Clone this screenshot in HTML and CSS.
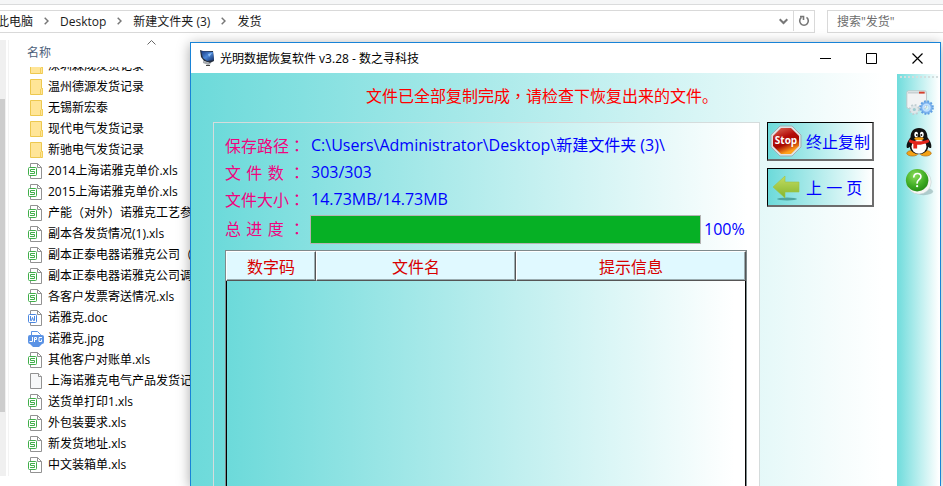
FILE: index.html
```html
<!DOCTYPE html>
<html lang="zh-CN">
<head>
  <meta charset="UTF-8">
  <meta name="viewport" content="width=device-width, initial-scale=1.0">
  <title>光明数据恢复软件 v3.28 - 数之寻科技</title>
  <link rel="stylesheet" href="styles.css">
</head>
<body>
  <svg class="sprite" aria-hidden="true">
    <symbol id="folder" viewBox="0 0 16 16">
      <path fill="#ffe597" stroke="#edc84f" d="M2.5.5h11v9h1v6h-12z"/>
      <path fill="#f3cf5b" d="M12 10h1v6h-1zM14 9h1v6h-1z"/>
    </symbol>
    <symbol id="xls" viewBox="0 0 16 16">
      <path fill="#fff" stroke="#929292" d="M2.5 5V.5h7l4 4v11h-11V13"/>
      <path fill="none" stroke="#929292" d="M9.5.5v4h4"/>
      <rect x=".5" y="4.5" width="8" height="8" rx="1" fill="#fff" stroke="#3fae49"/>
      <path fill="none" stroke="#3fae49" d="M7 6.5H2.500v2h4v2H2"/>
    </symbol>
    <symbol id="doc" viewBox="0 0 16 16">
      <path fill="#fff" stroke="#929292" d="M2.500 5V.500h7l4 4v11h-11V13"/>
      <path fill="none" stroke="#929292" d="M9.500.500v4h4"/>
      <rect x=".5" y="4.500" width="8" height="8" rx="1" fill="#fff" stroke="#4a86e0"/>
      <path fill="none" stroke="#4a86e0" d="M2.500 6v4.500h1l1-3 1 3h1V6"/>
    </symbol>
    <symbol id="jpg" viewBox="0 0 16 16">
      <path fill="#fff" stroke="#5b93e5" d="M3.500 5V.500h6l3 3V5"/>
      <rect y="4" width="16" height="9" rx="2" fill="#5b93e5"/>
      <path fill="#5b93e5" d="M2 13h12l-3 3H5z"/>
      <path fill="none" stroke="#fff" d="M4.500 6v4.500h-3M6.500 11V6.500h2v2h-2M14 6.500h-3v4h2.500v-2"/>
    </symbol>
    <symbol id="file" viewBox="0 0 16 16">
      <path fill="#f7f8f9" stroke="#929292" d="M2.500.500h8l3 3v12h-11z"/>
      <path fill="#fff" stroke="#929292" d="M10.500.500v3h3"/>
    </symbol>
    <symbol id="sep" viewBox="0 0 5 8">
      <path fill="none" stroke="#777" stroke-width="1.500" d="M.7.700 4 4 .7 7.300"/>
    </symbol>
  </svg>

  <div class="explorer">
    <div class="ribbon"></div>
    <div class="toolbar">
      <nav class="address">
        <a href="#">此电脑</a>
        <svg class="sep"><use href="#sep"/></svg>
        <a href="#">Desktop</a>
        <svg class="sep"><use href="#sep"/></svg>
        <a href="#">新建文件夹 (3)</a>
        <svg class="sep"><use href="#sep"/></svg>
        <a href="#">发货</a>
        <button class="drop" aria-label="历史记录"><svg width="9" height="7" viewBox="0 0 9 7"><path fill="none" stroke="#777" stroke-width="2" d="M.7 1.200 4.500 5l3.800-3.800"/></svg></button>
        <button class="refresh" aria-label="刷新"><svg width="12" height="12" viewBox="0 0 12 12"><path fill="none" stroke="#777" stroke-width="1.600" d="M3.500 2.400A4.300 4.300 0 1 0 8.500 2.400M2 1.500h3.500V5"/></svg></button>
      </nav>
      <input class="search" type="text" aria-label="搜索" placeholder="搜索&quot;发货&quot;">
    </div>

    <div class="content">
      <div class="scrollbar"><div class="thumb"></div></div>
      <div class="files">
        <div class="column-head">
          <span>名称</span>
          <svg width="9" height="5" viewBox="0 0 9 5"><path fill="none" stroke="#666" d="M.5 4.500l4-4 4 4"/></svg>
        </div>
        <div class="list-view">
          <ul class="list">
            <li><svg><use href="#folder"/></svg>深圳森成发货记录</li>
            <li><svg><use href="#folder"/></svg>温州德源发货记录</li>
            <li><svg><use href="#folder"/></svg>无锡新宏泰</li>
            <li><svg><use href="#folder"/></svg>现代电气发货记录</li>
            <li><svg><use href="#folder"/></svg>新驰电气发货记录</li>
            <li><svg><use href="#xls"/></svg>2014上海诺雅克单价.xls</li>
            <li><svg><use href="#xls"/></svg>2015上海诺雅克单价.xls</li>
            <li><svg><use href="#xls"/></svg>产能<span class="punct" lang="zh-TW">（</span>对外<span class="punct" lang="zh-TW">）</span>诺雅克工艺参数.xls</li>
            <li><svg><use href="#xls"/></svg>副本各发货情况(1).xls</li>
            <li><svg><use href="#xls"/></svg>副本正泰电器诺雅克公司<span class="punct" lang="zh-TW">（</span>.xls</li>
            <li><svg><use href="#xls"/></svg>副本正泰电器诺雅克公司调.xls</li>
            <li><svg><use href="#xls"/></svg>各客户发票寄送情况.xls</li>
            <li><svg><use href="#doc"/></svg>诺雅克.doc</li>
            <li><svg><use href="#jpg"/></svg>诺雅克.jpg</li>
            <li><svg><use href="#xls"/></svg>其他客户对账单.xls</li>
            <li><svg><use href="#file"/></svg>上海诺雅克电气产品发货记录</li>
            <li><svg><use href="#xls"/></svg>送货单打印1.xls</li>
            <li><svg><use href="#xls"/></svg>外包装要求.xls</li>
            <li><svg><use href="#xls"/></svg>新发货地址.xls</li>
            <li><svg><use href="#xls"/></svg>中文装箱单.xls</li>
          </ul>
        </div>
      </div>
    </div>
  </div>

  <div class="window">
    <header class="titlebar">
      <svg class="app-icon" viewBox="0 0 16 16">
        <defs><linearGradient id="screen" x1="0" y1="0" x2="1" y2="1"><stop offset="0" stop-color="#16357a"/><stop offset=".5" stop-color="#4a86d8"/><stop offset="1" stop-color="#122c66"/></linearGradient></defs>
        <path fill="#26303f" d="M0 0l3 1 10 0 1 10-4 2-6-2-3-4z"/>
        <path fill="url(#screen)" d="M1 1l12 1 1 8-7 1-4-3z"/>
        <path fill="#8fc0f5" d="M8 4l4-1-3 4z"/>
        <path fill="#a5a9ad" d="M3 11l7 2 1 1-3 1-5-2z"/>
        <path fill="#444" d="M6 15h4v1H6z"/>
      </svg>
      <h1>光明数据恢复软件 v3.28 - 数之寻科技</h1>
      <button class="win-btn" aria-label="最小化"><svg viewBox="0 0 11 11"><path stroke="#000" d="M0 5.500h11"/></svg></button>
      <button class="win-btn" aria-label="最大化"><svg viewBox="0 0 11 11"><path fill="none" stroke="#000" d="M.5.500h10v10H.5z"/></svg></button>
      <button class="win-btn" aria-label="关闭"><svg viewBox="0 0 11 11"><path stroke="#000" stroke-width="1.200" d="M.5.500l10 10M10.500.500l-10 10"/></svg></button>
    </header>

    <div class="window-body">
      <main class="main">
        <p class="message">文件已全部复制完成<span class="punct" lang="zh-TW">，</span>请检查下恢复出来的文件。</p>
        <div class="columns">
          <section class="panel">
            <div class="info"><span class="label">保存路径<span class="punct" lang="zh-TW">：</span></span><span>C:\Users\Administrator\Desktop\新建文件夹 (3)\</span></div>
            <div class="info"><span class="label">文 件 数 <span class="punct" lang="zh-TW">：</span></span><span>303/303</span></div>
            <div class="info"><span class="label">文件大小<span class="punct" lang="zh-TW">：</span></span><span>14.73MB/14.73MB</span></div>
            <div class="info total">
              <label class="label" for="total">总 进 度 <span class="punct" lang="zh-TW">：</span></label>
              <progress id="total" value="100" max="100"></progress>
              <span class="percent">100%</span>
            </div>
            <div class="grid">
              <table>
                <thead>
                  <tr><th class="col-no">数字码</th><th class="col-name">文件名</th><th>提示信息</th></tr>
                </thead>
              </table>
              <div class="grid-body"></div>
            </div>
          </section>

          <div class="actions">
            <button class="action">
              <svg viewBox="0 0 32 32">
                <defs><linearGradient id="red" x1="0" y1="0" x2=".4" y2="1"><stop offset="0" stop-color="#e0705c"/><stop offset=".45" stop-color="#b40d0a"/><stop offset=".7" stop-color="#a80800"/><stop offset="1" stop-color="#ffa21c"/></linearGradient></defs>
                <path fill="#dfe3e5" stroke="#9fb0b4" d="M10 1h12l9 9v12l-9 9H10l-9-9V10z"/>
                <path fill="url(#red)" d="M11 3h10l8 8v10l-8 8H11l-8-8V11z"/>
                <text x="16" y="19" text-anchor="middle">Stop</text>
              </svg>
              <span>终止复制</span>
            </button>
            <button class="action">
              <svg viewBox="0 0 32 32">
                <defs><linearGradient id="green" x1="0" y1="0" x2="0" y2="1"><stop offset="0" stop-color="#c3dc62"/><stop offset="1" stop-color="#84b52c"/></linearGradient></defs>
                <ellipse cx="17" cy="28" rx="10" ry="1.500" fill="#4fa5a0"/>
                <path fill="url(#green)" stroke="#9fc244" stroke-width=".6" d="M3 16L15 5v6h14v10H15v6z"/>
              </svg>
              <span>上 一 页</span>
            </button>
          </div>
        </div>
      </main>

      <aside class="rail">
        <button aria-label="设置">
          <svg viewBox="0 0 32 32">
            <rect x="3" y="4" width="21" height="19" rx="2" fill="#f1f3f4" stroke="#b9c7ca"/>
            <path fill="#c9d1d4" d="M4 5h19v2H4z"/><path fill="#d8402c" d="M16 5h6v2h-6z"/>
            <circle cx="24" cy="22" r="4.500" fill="none" stroke="#7db3ee" stroke-width="4"/>
            <circle cx="24" cy="22" r="6.800" fill="none" stroke="#5f9fe2" stroke-width="2" stroke-dasharray="2 1.560"/>
            <circle cx="24" cy="22" r="3.500" fill="none" stroke="#bfe0ff" stroke-width="2"/>
            <circle cx="11" cy="24" r="3.200" fill="#9ccbd0" stroke="#dfe6e9" stroke-width="3"/>
            <circle cx="11" cy="24" r="5" fill="none" stroke="#c0ced2" stroke-width="2" stroke-dasharray="1.900 2"/>
          </svg>
        </button>
        <button aria-label="QQ">
          <svg viewBox="0 0 32 32">
            <ellipse cx="9" cy="28" rx="6" ry="3" fill="#f5a214" stroke="#a55a00" stroke-width=".6"/>
            <ellipse cx="23" cy="28" rx="6" ry="3" fill="#f5a214" stroke="#a55a00" stroke-width=".6"/>
            <path fill="#111" d="M16 1c-6 0-9 4-9 10-2 3-5 7-4 11 1 1 2 0 3-1 1 5 5 8 10 8s9-3 10-8c1 1 2 2 3 1 1-4-2-8-4-11 0-6-3-10-9-10z"/>
            <ellipse cx="16" cy="21" rx="8" ry="7.500" fill="#fff"/>
            <ellipse cx="13" cy="8" rx="2" ry="3" fill="#fff"/><ellipse cx="19" cy="8" rx="2" ry="3" fill="#fff"/>
            <circle cx="13.700" cy="8.500" r="1" fill="#111"/><circle cx="18.500" cy="8.500" r="1" fill="#111"/>
            <ellipse cx="16" cy="12.500" rx="5" ry="1.500" fill="#f5a214"/>
            <path fill="#e3231b" d="M6 13c6 3 14 3 20 0l1 3c-4 2-8 3-13 3v4h-4v-5l-5-2z"/>
          </svg>
        </button>
        <button aria-label="帮助">
          <svg viewBox="0 0 32 32">
            <defs><radialGradient id="ball" cx=".4" cy=".3" r=".8"><stop offset="0" stop-color="#8bdc5a"/><stop offset=".6" stop-color="#3dab22"/><stop offset="1" stop-color="#1f8212"/></radialGradient></defs>
            <ellipse cx="21" cy="26" rx="10" ry="4" fill="#9bb9ba" opacity=".7"/>
            <circle cx="16" cy="16" r="13" fill="#f4f6f5" stroke="#c3cfcf" stroke-width=".6"/>
            <circle cx="14" cy="14" r="12" fill="url(#ball)"/>
            <path fill="none" stroke="#fff" stroke-width="1.800" stroke-linecap="round" d="M10.500 10.500c.5-5 8-4.500 7.500 0-.4 3-4 3-4 6.500"/>
            <circle cx="14" cy="20.500" r="1.200" fill="#fff"/>
          </svg>
        </button>
      </aside>
    </div>
  </div>
</body>
</html>
```
FILE: styles.css
```css
* {
  box-sizing: border-box;
}
body {
  margin: 0;
  height: 100vh;
  overflow: hidden;
  background: #fff;
  color: #000;
  font-family: "Open Sans", "Noto Sans CJK SC", sans-serif;
  font-size: 12px;
}
button {
  padding: 0;
  border: none;
  background: none;
  font: inherit;
  cursor: pointer;
}
svg {
  display: block;
  flex: none;
}
.sprite {
  display: none;
}
.punct {
  font-family: "Noto Sans CJK TC", sans-serif;
}

/* file explorer */
.explorer {
  display: flex;
  flex-direction: column;
  height: 100%;
}
.ribbon {
  height: 5px;
  background: #f5f6f7;
  border-bottom: 1px solid #dadbdc;
}
.toolbar {
  display: flex;
  gap: 12px;
  padding-top: 5px;
}
.address {
  flex: 1;
  display: flex;
  align-items: center;
  gap: 11px;
  height: 23px;
  padding-bottom: 1px;
  border: 1px solid #d9d9d9;
  border-left: none;
}
.address a {
  color: #1a1a1a;
  text-decoration: none;
  white-space: nowrap;
}
.address a:first-child {
  margin-left: -3px;
}
.sep {
  width: 5px;
  height: 8px;
}
.drop {
  margin-left: auto;
}
.refresh {
  display: flex;
  align-items: center;
  justify-content: center;
  width: 21px;
  height: 100%;
  margin-left: -6px;
  border-left: 1px solid #d9d9d9;
}
.search {
  width: 116px;
  height: 23px;
  padding: 0 9px;
  border: 1px solid #d9d9d9;
  border-right: none;
  font: inherit;
}
.search::placeholder {
  color: #6d6d6d;
}
.content {
  flex: 1;
  display: flex;
  gap: 2px;
  min-height: 0;
  padding: 7px 0 10px;
}
.scrollbar {
  width: 6px;
  padding-top: 59px;
  background: #f0f0f0;
}
.thumb {
  width: 5px;
  height: 83%;
  background: #cdcdcd;
}
.files {
  flex: 1;
  display: flex;
  flex-direction: column;
  min-height: 0;
  border-left: 1px solid #f3f3f3;
}
.column-head {
  display: flex;
  gap: 96px;
  height: 27px;
  padding-left: 18px;
  color: #4c607a;
  line-height: 26px;
}
.list-view {
  flex: 1;
  overflow: hidden;
}
.list {
  margin: -12px 0 0;
  padding: 0 0 0 19px;
  list-style: none;
}
.list li {
  display: flex;
  align-items: center;
  height: 21px;
  line-height: 21px;
  white-space: nowrap;
}
.list svg {
  width: 16px;
  height: 16px;
  margin-right: 4px;
}

/* recovery program window, over the explorer */
.window {
  position: absolute;
  top: 42px;
  right: 2px;
  bottom: 0;
  left: 190px;
  display: flex;
  flex-direction: column;
  border: 1px solid #1883d7;
  border-bottom: none;
  background: #fff;
  box-shadow: 0 2px 12px rgba(0, 0, 0, 0.35);
}
.titlebar {
  display: flex;
  align-items: center;
  height: 30px;
  padding-left: 9px;
}
.app-icon {
  width: 16px;
  height: 16px;
  margin-right: 4px;
}
.titlebar h1 {
  flex: 1;
  margin: 0;
  font-size: 12px;
  font-weight: normal;
}
.win-btn {
  display: flex;
  align-items: center;
  justify-content: center;
  width: 46px;
  height: 100%;
}
.win-btn svg {
  width: 11px;
  height: 11px;
}
.window-body {
  flex: 1;
  display: flex;
  min-height: 0;
}
.main {
  flex: 1;
  display: flex;
  flex-direction: column;
  background: linear-gradient(to right, #6cdada, #fff 98%);
  font-size: 16px;
}
.message {
  margin: 0;
  height: 49px;
  padding-right: 4px;
  line-height: 44px;
  color: #f00;
  text-align: center;
}
.columns {
  flex: 1;
  display: flex;
  gap: 7px;
  padding: 0 23px 0 22px;
}
.panel {
  flex: 1;
  display: flex;
  flex-direction: column;
  padding: 9px 12px 0 11px;
  border: 1px solid #d5dcdc;
  border-bottom: none;
  background: linear-gradient(to right, #6cdada, #fff 98%);
}
.info {
  display: flex;
  align-items: center;
  gap: 6px;
  height: 27px;
  color: #00f;
  line-height: 27px;
  white-space: nowrap;
}
.label {
  width: 80px;
  color: #f0047f;
  text-align-last: justify;
}
.total {
  height: 32px;
  gap: 3px;
}
.total .label {
  margin-right: 2px;
}
progress {
  flex: 1;
  height: 29px;
  border: 1px solid #b4b4b4;
  appearance: none;
}
progress::-webkit-progress-bar {
  background: #e6e6e6;
}
progress::-webkit-progress-value {
  background: #06b025;
}
.percent {
  width: 43px;
}
.grid {
  flex: 1;
  display: flex;
  flex-direction: column;
  margin-top: 5px;
  border: 1px solid #7f8a8c;
  border-bottom: none;
}
table {
  width: 100%;
  border-collapse: separate;
  border-spacing: 0;
  table-layout: fixed;
}
th {
  height: 30px;
  padding: 2px 0 0;
  border: 1px solid #fff;
  border-right-color: #555;
  border-bottom-color: #555;
  background: #e0f9ff;
  box-shadow: inset -1px -1px #9aacb0;
  color: #d80000;
  font-weight: normal;
  line-height: 20px;
}
.col-no {
  width: 90px;
}
.col-name {
  width: 200px;
}
.grid-body {
  flex: 1;
  border: solid #000;
  border-width: 0 1px;
  background: linear-gradient(to right, #6cdada, #fff 98%);
}
.actions {
  display: flex;
  flex-direction: column;
  gap: 7px;
  width: 107px;
}
.action {
  display: flex;
  align-items: center;
  gap: 4px;
  height: 39px;
  padding-left: 2px;
  border: 1px solid #000;
  border-right: 2px solid #6c6c6c;
  border-bottom: 2px solid #6c6c6c;
  background: linear-gradient(to right, #6cdada, #fff);
  color: #00f;
  font-size: 16px;
  white-space: nowrap;
}
.action svg {
  width: 32px;
  height: 32px;
}
.action text {
  fill: #fff;
  font-size: 10px;
  font-weight: bold;
}
.rail {
  display: flex;
  flex-direction: column;
  align-items: center;
  gap: 8px;
  width: 43px;
  margin-top: 1px;
  background: linear-gradient(to right, #6fdcdc, #fff 98%);
}
.rail::before {
  content: "";
  width: 38px;
  margin-top: 2px;
  border-top: 2px dotted #d3dede;
}
.rail button svg {
  width: 30px;
  height: 32px;
}
```
